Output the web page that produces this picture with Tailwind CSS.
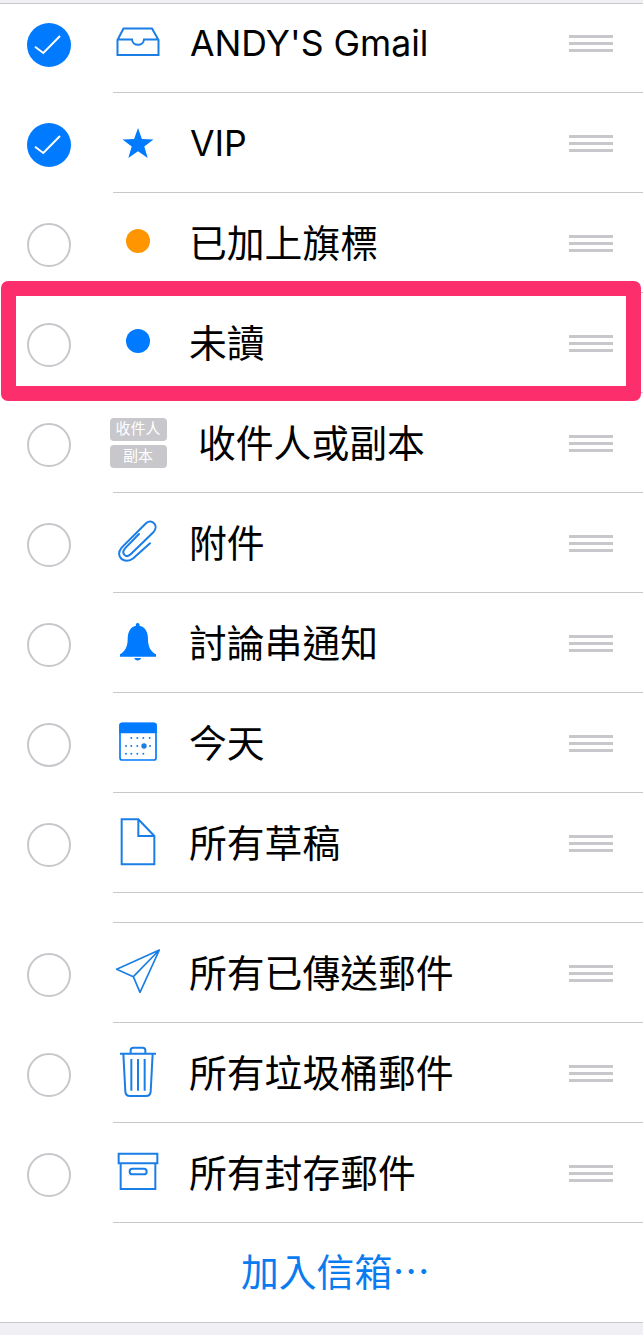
<!DOCTYPE html>
<html lang="zh-Hant">
<head>
  <meta charset="UTF-8" />
  <meta name="viewport" content="width=device-width, initial-scale=1" />
  <title>信箱</title>
  <script src="https://cdn.jsdelivr.net/npm/@tailwindcss/browser@4"></script>
</head>
<body class="relative h-[1335px] overflow-hidden bg-[#efeff4] text-black font-['Inter','Noto_Sans_CJK_TC',sans-serif]">
  <div class="absolute inset-x-0 top-0 z-10 h-[4px] bg-[#efeff4] border-b border-[#c8c7cc]"></div>

  <main class="-mt-[7px] bg-white">
    <div id="group1"></div>
    <div class="ml-[113px] h-[30px] border-b border-[#c8c7cc]"></div>
    <div id="group2"></div>
    <button class="block w-full h-[100px] border-b border-[#c8c7cc] pl-[241px] text-left text-[37.8px] text-[#0a7cf0]">加入信箱⋯</button>
  </main>

  <!-- pink highlight round the unread row -->
  <div class="absolute left-[1px] top-[281px] h-[120px] w-[640px] rounded-[7px] border-[15px] border-[#fd2e6c]"></div>

  <script>
    const svg = (viewBox, body) => `<svg width="50" height="59" viewBox="${viewBox}" fill="none" stroke="#1a7ee6">${body}</svg>`;
    const dots = [[124,84],[142,84],[160,84],[179,84],[108,108],[124,108],[142,108],[180,108],[108,131],[124,131],[142,131],[160,131]]
      .map(([x, y]) => `<circle cx="${x}" cy="${y}" r="3"/>`).join('');

    const icons = {
      inbox: svg('0 0 50 59', '<path stroke-width="2" d="M4.5 27 10.5 15.5H39L45.5 27V42H4.5ZM4.5 26.5H19C19.5 33.5 30.5 33.5 31 26.5H45.5"/>'),
      star: svg('0 0 50 59', '<path fill="#007aff" stroke="none" d="M25 15 28.9 26 40.5 26.4 31.3 33.5 34.7 45 25 38.3 15.3 45 18.7 33.5 9.5 26.4 21.1 26Z"/>'),
      orange: svg('0 0 50 59', '<circle cx="25" cy="28" r="12" fill="#ff9500" stroke="none"/>'),
      blue: svg('0 0 50 59', '<circle cx="25" cy="28" r="12" fill="#007aff" stroke="none"/>'),
      clip: svg('69 9 150 177', '<path stroke-width="6" stroke-linecap="round" d="M147 72 105 115C92 130 108 146 122 133L190 67C208 48 186 24 168 40L95 113C72 140 105 165 130 145L180 100"/>'),
      bell: svg('69 309 150 177', '<g fill="#007aff" stroke="none"><circle cx="143" cy="345" r="6"/><path d="M143 347C122 347 113 365 113 388 113 410 105 425 90 433V440H198V433C182 425 174 410 174 388 174 365 165 347 143 347Z"/><path d="M133 444H153C152 454 134 454 133 444Z"/></g>'),
      calendar: svg('69 9 150 177', `<rect x="90" y="40" width="108" height="110" rx="7" stroke="#007aff" stroke-width="5"/><path fill="#007aff" stroke="none" d="M95 38H193Q200 38 200 45V70H88V45Q88 38 95 38Z"/><g fill="#1a7ee6" stroke="none">${dots}<circle cx="162" cy="108" r="8"/></g>`),
      draft: svg('69 309 150 177', '<path stroke-width="6" d="M95 328H145L193 378V463H95ZM145 328V378H193"/>'),
      sent: svg('69 9 150 177', '<path stroke-width="5" stroke-linejoin="round" d="M208 30 80 88 130 110 150 157ZM208 30 130 110"/>'),
      trash: svg('69 309 150 177', '<path stroke-width="6" d="M90 341H198M122 341V331Q122 323 130 323H158Q166 323 166 331V341M100 341 106 455Q107 468 120 468H168Q181 468 182 455L188 341M124 357V452M144 357V452M164 357V452"/>'),
      archive: svg('69 39 150 177', '<path stroke-width="6" d="M86 71H202V100H86ZM92 100V177H196V100"/><rect x="119" y="116" width="51" height="17" rx="8" stroke-width="6"/>')
    };

    const badges = `
      <div class="flex w-[57px] shrink-0 flex-col gap-[4px] text-center text-[15px] leading-[22px] text-white">
        <span class="h-[23px] rounded-[4px] bg-[#c7c7cc]">收件人</span>
        <span class="h-[23px] rounded-[4px] bg-[#c7c7cc]">副本</span>
      </div>`;

    const group1 = [
      { label: "ANDY'S Gmail", icon: icons.inbox, checked: true, latin: true },
      { label: 'VIP', icon: icons.star, checked: true, latin: true },
      { label: '已加上旗標', icon: icons.orange },
      { label: '未讀', icon: icons.blue },
      { label: '收件人或副本', icon: badges, indent: true },
      { label: '附件', icon: icons.clip },
      { label: '討論串通知', icon: icons.bell },
      { label: '今天', icon: icons.calendar },
      { label: '所有草稿', icon: icons.draft }
    ];
    const group2 = [
      { label: '所有已傳送郵件', icon: icons.sent },
      { label: '所有垃圾桶郵件', icon: icons.trash },
      { label: '所有封存郵件', icon: icons.archive }
    ];

    const check = `<svg width="44" height="44" viewBox="0 0 44 44" fill="none" stroke="white" stroke-width="2"><path d="M8 23.7 16.3 30 33 13"/></svg>`;

    function renderRows(id, rows) {
      document.getElementById(id).innerHTML = rows.map(row => `
        <div class="flex h-[100px] pl-[27px]">
          <div class="mt-[30px] mr-[42px] h-[44px] w-[44px] shrink-0 rounded-full ${row.checked ? 'bg-[#007aff]' : 'border-2 border-[#c7c7cc]'}">${row.checked ? check : ''}</div>
          <div class="flex min-w-0 flex-1 items-center border-b border-[#c8c7cc]">
            <div class="flex h-[59px] w-[50px] shrink-0 items-center justify-center">${row.icon}</div>
            <span class="flex-1 whitespace-nowrap pt-[2px] ${row.latin ? 'text-[35.6px] ml-[27px]' : row.indent ? 'text-[37.8px] ml-[35px]' : 'text-[37.8px] ml-[26px]'}">${row.label}</span>
            <div class="mr-[30px] mt-[2px] flex w-[44px] shrink-0 flex-col gap-[4px]">
              <i class="h-[3px] bg-[#c7c7cc]"></i><i class="h-[3px] bg-[#c7c7cc]"></i><i class="h-[3px] bg-[#c7c7cc]"></i>
            </div>
          </div>
        </div>`).join('');
    }

    renderRows('group1', group1);
    renderRows('group2', group2);
  </script>
</body>
</html>
